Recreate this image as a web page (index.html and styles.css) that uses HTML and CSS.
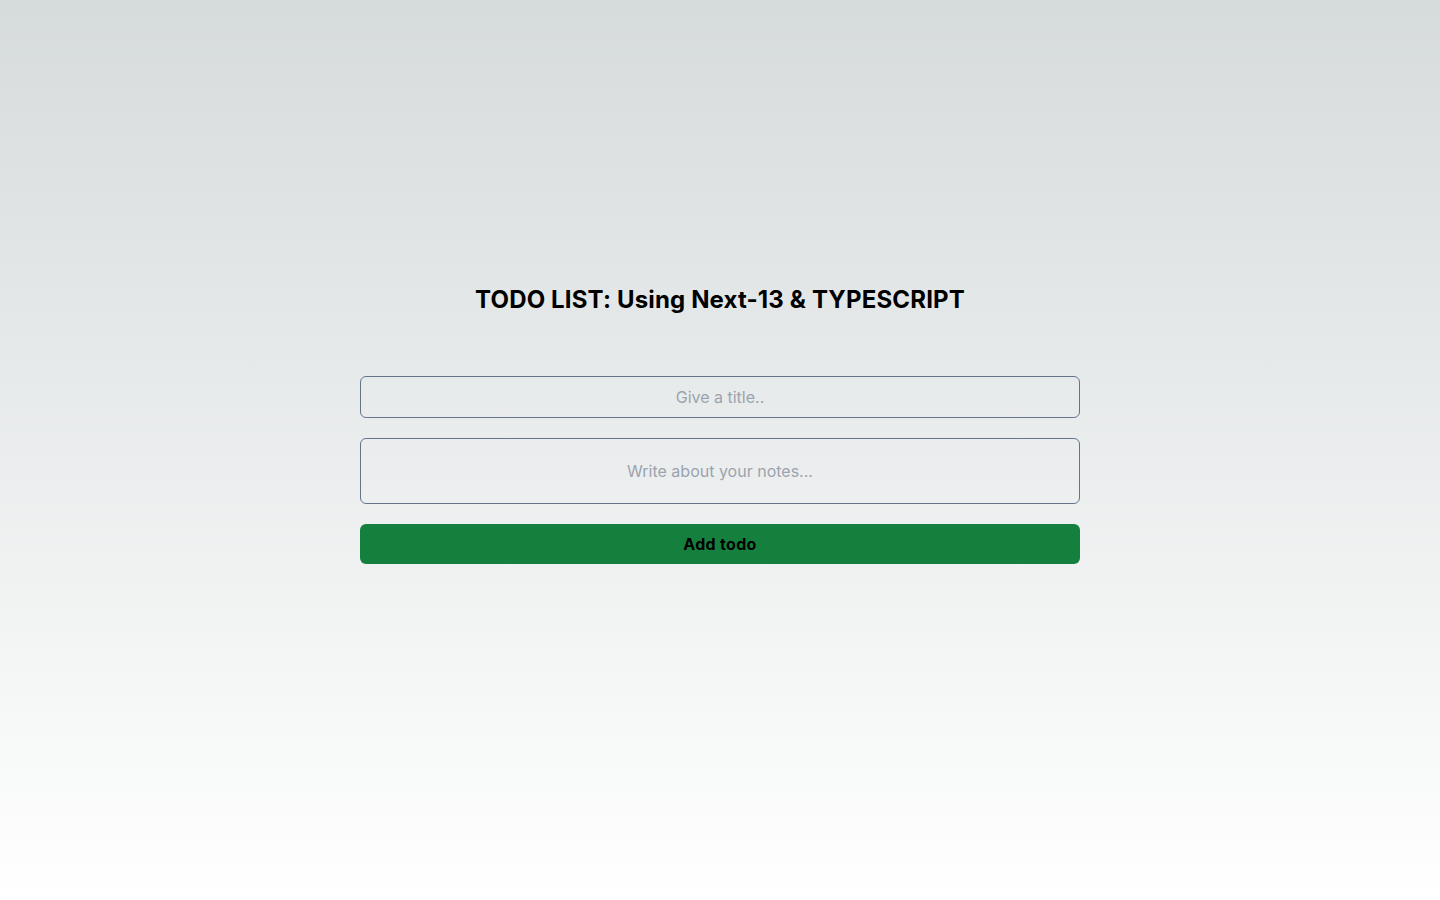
FILE: index.html
```html
<!DOCTYPE html>
<html lang="en">
<head>
<meta charset="utf-8">
<title>Todo</title>
<link rel="stylesheet" href="styles.css">
</head>
<body>
<main class="page">
  <h1 class="title">TODO LIST: Using Next-13 &amp; TYPESCRIPT</h1>
  <form class="form">
    <input class="field field-title" type="text" placeholder="Give a title..">
    <textarea class="field field-notes" rows="1" placeholder="Write about your notes..."></textarea>
    <button class="add-btn" type="button">Add todo</button>
  </form>
</main>
</body>
</html>
```

FILE: styles.css
```css
* { box-sizing: border-box; }
html, body { margin: 0; padding: 0; }
body {
  min-height: 100vh;
  font-family: Inter, "Noto Sans", sans-serif;
  color: #000;
  background: linear-gradient(to bottom, transparent, #ffffff) rgb(214, 219, 220);
}
.page {
  display: flex;
  flex-direction: column;
  align-items: center;
  padding-top: 284px;
}
.title {
  margin: 0 0 60px;
  font-size: 24px;
  line-height: 32px;
  font-weight: 700;
  letter-spacing: 0.15px;
  text-align: center;
}
.form {
  width: 720px;
  display: flex;
  flex-direction: column;
  gap: 20px;
}
.field {
  display: block;
  width: 100%;
  margin: 0;
  font-family: inherit;
  font-size: 16px;
  line-height: 24px;
  color: #000;
  text-align: center;
  background: transparent;
  border: 1px solid #64748b;
  border-radius: 6px;
  outline: none;
}
.field::placeholder { color: #9ca3af; opacity: 1; }
.field-title { height: 42px; padding: 8px 12px; }
.field-notes { height: 66px; padding: 20px 12px; resize: none; overflow: hidden; }
.add-btn {
  height: 40px;
  width: 100%;
  border: none;
  border-radius: 6px;
  background: #15803d;
  color: #000;
  font-family: inherit;
  font-size: 16px;
  line-height: 24px;
  font-weight: 700;
  letter-spacing: 0.3px;
  cursor: pointer;
}
```
